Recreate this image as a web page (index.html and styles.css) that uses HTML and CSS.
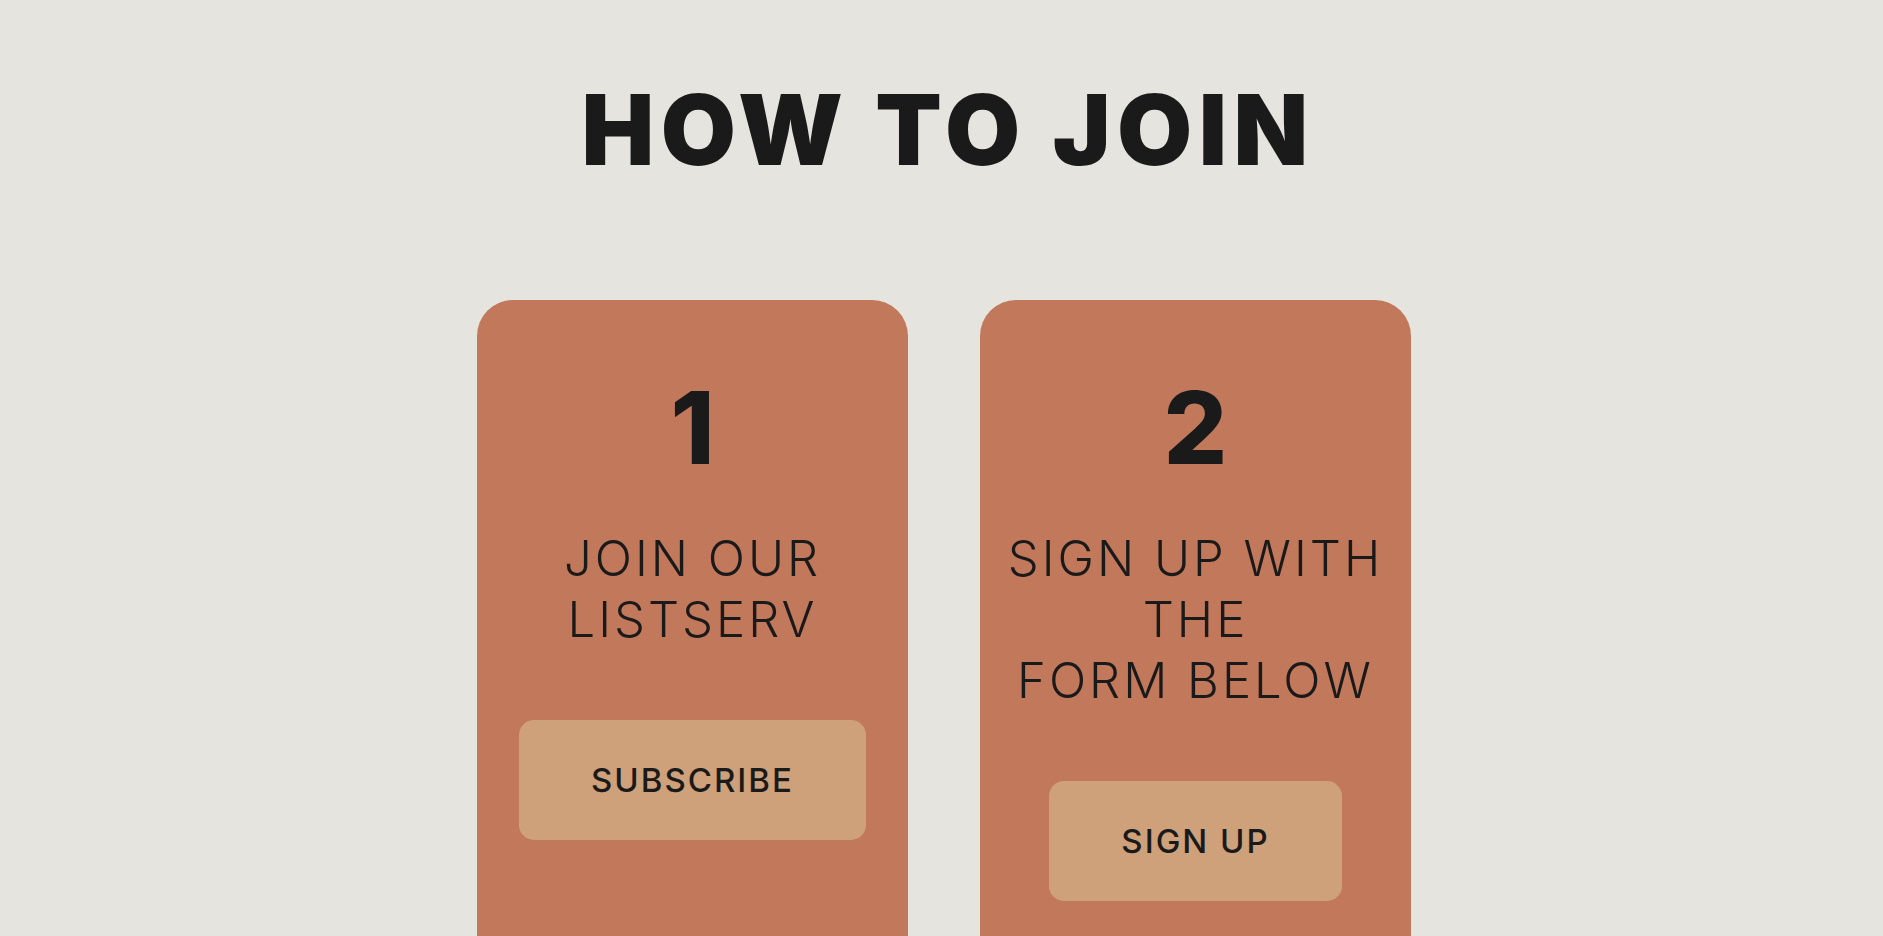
FILE: index.html
```html
<!DOCTYPE html>
<html lang="en">
<head>
    <meta charset="UTF-8">
    <meta name="viewport" content="width=device-width, initial-scale=1.0">
    <title>How to Join</title>
    <link rel="stylesheet" href="styles.css">
</head>
<body>
    <section class="join">
        <h1>HOW TO JOIN</h1>

        <div class="steps">
            <div class="step-card">
                <div class="step-num">1</div>
                <p class="step-text">JOIN OUR LISTSERV</p>
                <a href="#" class="step-btn">SUBSCRIBE</a>
            </div>

            <div class="step-card">
                <div class="step-num">2</div>
                <p class="step-text">SIGN UP WITH THE<br>FORM BELOW</p>
                <a href="#" class="step-btn">SIGN UP</a>
            </div>
        </div>
    </section>
</body>
</html>
```

FILE: styles.css
```css
body {
    margin: 0;
    background: #e5e4df;
    color: #1a1a1a;
    font-family: 'Inter', 'Liberation Sans', sans-serif;
    overflow: hidden;
}

.join {
    padding-top: 73px;
    text-align: center;
}

h1 {
    margin: 0 0 113px;
    font-family: 'Inter', 'Liberation Sans', sans-serif;
    font-weight: 900;
    font-size: 97px;
    line-height: 114px;
    letter-spacing: 6.5px;
    padding-left: 13px;
}

.steps {
    display: flex;
    justify-content: center;
    gap: 72px;
    padding-left: 5px;
}

.step-card {
    width: 431px;
    box-sizing: border-box;
    background: #c1785b;
    border-radius: 36px 36px 0 0;
    padding: 67px 12px 120px;
    min-height: 700px;
}

.step-num {
    font-weight: 800;
    font-size: 100px;
    line-height: 121px;
}

.step-text {
    margin: 40px 0 70px;
    font-size: 49px;
    font-weight: 300;
    line-height: 61px;
    letter-spacing: 3px;
}

.step-btn {
    display: inline-block;
    background: #cea17b;
    color: #1a1a1a;
    text-decoration: none;
    font-size: 33px;
    font-weight: 500;
    line-height: 48px;
    letter-spacing: 2px;
    padding: 36px 72px;
    border-radius: 15px;
}
```
